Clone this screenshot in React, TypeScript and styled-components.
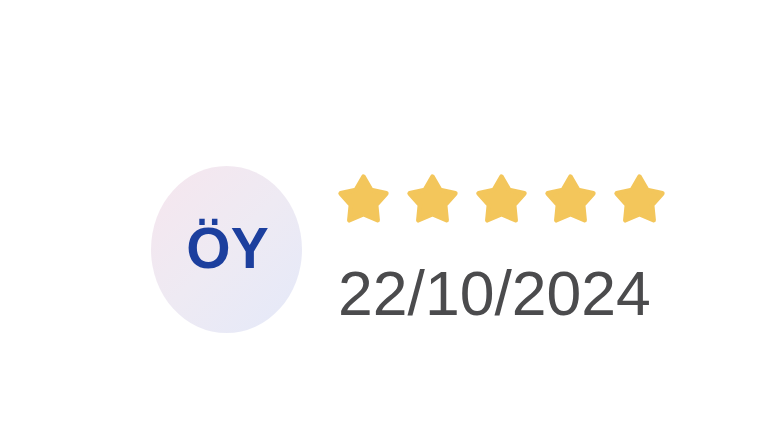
import React from "react";
import styled, { createGlobalStyle } from "styled-components";

const GlobalStyle = createGlobalStyle`
  html, body {
    margin: 0;
    padding: 0;
    background: #ffffff;
  }
  body {
    font-family: "Liberation Sans", Arial, sans-serif;
  }
`;

const Page = styled.main`
  width: 768px;
  height: 435px;
  box-sizing: border-box;
  padding: 166px 0 0 151px;
  background: #ffffff;
`;

const ReviewRow = styled.section`
  display: flex;
  align-items: flex-start;
  gap: 36px;
`;

const Avatar = styled.div`
  width: 151px;
  height: 167px;
  border-radius: 50%;
  background: linear-gradient(135deg, #f6e6ee 0%, #eeeaf3 50%, #e4e9f9 100%);
  display: flex;
  align-items: center;
  justify-content: center;
  flex-shrink: 0;
`;

const Initials = styled.span`
  font-family: "Liberation Sans", Arial, sans-serif;
  font-weight: 700;
  font-size: 57px;
  line-height: 1;
  color: #1c3f9e;
  letter-spacing: 0;
  margin: 0 0 3px 2px;
`;

const Details = styled.div`
  display: flex;
  flex-direction: column;
  padding-top: 5px;
`;

const Stars = styled.div`
  display: flex;
  gap: 14px;
  margin-left: -2px;
`;

const StarIcon = styled.svg`
  width: 55px;
  height: 55px;
  display: block;
`;

const DateText = styled.div`
  margin-top: 36px;
  font-family: "Liberation Sans", Arial, sans-serif;
  font-size: 62.5px;
  line-height: 62px;
  color: #4b4b4d;
  letter-spacing: 0;
`;

// Rounded five-point star, centred at (12, 13) with a fairly wide inner radius.
const STAR_POINTS =
  "12,2.5 15.409,8.308 21.986,9.755 17.516,14.792 18.172,21.495 12,18.8 5.828,21.495 6.484,14.792 2.014,9.755 8.591,8.308";

const Star: React.FC = () => (
  <StarIcon viewBox="0 0 24 24" aria-hidden="true">
    <polygon
      points={STAR_POINTS}
      fill="#f3c65b"
      stroke="#f3c65b"
      strokeWidth={2}
      strokeLinejoin="round"
    />
  </StarIcon>
);

export default function App() {
  const rating = 5;
  return (
    <>
      <GlobalStyle />
      <Page>
        <ReviewRow>
          <Avatar>
            <Initials>ÖY</Initials>
          </Avatar>
          <Details>
            <Stars>
              {Array.from({ length: rating }).map((_, i) => (
                <Star key={i} />
              ))}
            </Stars>
            <DateText>22/10/2024</DateText>
          </Details>
        </ReviewRow>
      </Page>
    </>
  );
}
